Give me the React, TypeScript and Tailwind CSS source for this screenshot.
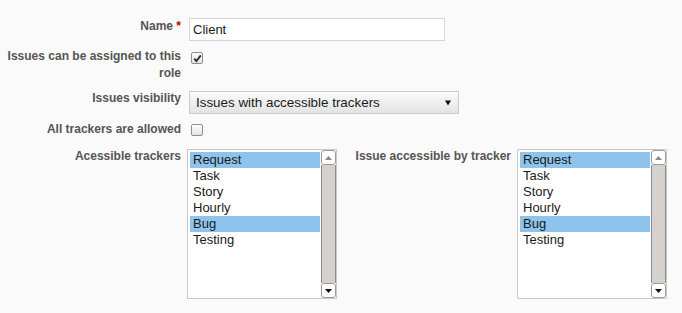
import React from "react";

type Tracker = { name: string; selected: boolean };

const trackers: Tracker[] = [
  { name: "Request", selected: true },
  { name: "Task", selected: false },
  { name: "Story", selected: false },
  { name: "Hourly", selected: false },
  { name: "Bug", selected: true },
  { name: "Testing", selected: false },
];

function Checkbox({ checked }: { checked: boolean }) {
  return (
    <span className="flex h-[12px] w-[12px] items-center justify-center rounded-[2px] border border-[#8e8e8e] bg-gradient-to-b from-[#fdfdfd] to-[#e4e4e4]">
      {checked ? (
        <svg width="9" height="9" viewBox="0 0 9 9">
          <path d="M1.2 4.6 L3.4 7 L7.8 1.4" fill="none" stroke="#2a2a2a" strokeWidth="1.8" />
        </svg>
      ) : null}
    </span>
  );
}

function Arrow({ up, color }: { up?: boolean; color: string }) {
  return (
    <svg width="7" height="4" viewBox="0 0 7 4">
      <path d={up ? "M0 4 L3.5 0 L7 4 Z" : "M0 0 L7 0 L3.5 4 Z"} fill={color} />
    </svg>
  );
}

function ListBox({ items }: { items: Tracker[] }) {
  return (
    <div className="flex h-[150px] w-[150px] border border-[#c8c8c8] bg-white">
      <ul className="flex-1 pl-[2px] pt-[2px] pr-[1px]">
        {items.map((t) => (
          <li
            key={t.name}
            className={
              "h-[16px] pl-[3px] text-[13px] leading-[16px] text-[#1a1a1a] " +
              (t.selected ? "bg-[#8ec4eb]" : "")
            }
          >
            {t.name}
          </li>
        ))}
      </ul>
      <div className="flex w-[15px] flex-col">
        <div className="flex h-[15px] items-center justify-center rounded-[3px] border border-[#9a9a9a] bg-white">
          <Arrow up color="#8a8a8a" />
        </div>
        <div className="flex-1 border-x border-[#8c8c8c] bg-[#d5d1cc]" />
        <div className="flex h-[15px] items-center justify-center rounded-[3px] border border-[#9a9a9a] bg-white">
          <Arrow color="#111" />
        </div>
      </div>
    </div>
  );
}

export default function App() {
  return (
    <div className="h-[313px] w-[682px] overflow-hidden bg-[#fafafa] font-['Liberation_Sans',Arial,sans-serif] text-[12px] leading-[17px]">
      <div className="pt-[18px]">
        <div className="flex items-start">
          <label className="w-[181px] text-right font-bold text-[#555]">
            Name <span className="text-[#bb0000]">*</span>
          </label>
          <input
            readOnly
            value="Client"
            className="ml-[8px] h-[23px] w-[256px] border border-[#d5d5d5] bg-white pl-[3px] text-[13px] text-[#1a1a1a] outline-none"
          />
        </div>

        <div className="mt-[7px] flex items-start">
          <label className="w-[181px] text-right font-bold text-[#555]">
            Issues can be assigned to this role
          </label>
          <span className="ml-[10px] mt-[4px]">
            <Checkbox checked />
          </span>
        </div>

        <div className="mt-[8px] flex items-start">
          <label className="w-[181px] text-right font-bold text-[#555]">Issues visibility</label>
          <div className="ml-[8px] mt-px flex h-[23px] w-[270px] items-center justify-between border border-[#cacaca] bg-gradient-to-b from-[#fbfbfb] to-[#e3e3e3] pl-[6px] pr-[7px] text-[13.4px] text-[#1a1a1a]">
            <span>Issues with accessible trackers</span>
            <svg width="6" height="6" viewBox="0 0 6 6">
              <path d="M0 0.5 L6 0.5 L3 5.5 Z" fill="#111" />
            </svg>
          </div>
        </div>

        <div className="mt-[7px] flex items-start">
          <label className="w-[181px] text-right font-bold text-[#555]">All trackers are allowed</label>
          <span className="ml-[10px] mt-[3px]">
            <Checkbox checked={false} />
          </span>
        </div>

        <div className="mt-[10px] flex items-start">
          <label className="w-[181px] text-right font-bold text-[#555]">Acessible trackers</label>
          <div className="ml-[6px] mt-px">
            <ListBox items={trackers} />
          </div>
          <label className="ml-[17px] w-[157px] whitespace-nowrap text-right font-bold text-[#555]">
            Issue accessible by tracker
          </label>
          <div className="ml-[6px] mt-px">
            <ListBox items={trackers} />
          </div>
        </div>
      </div>
    </div>
  );
}
